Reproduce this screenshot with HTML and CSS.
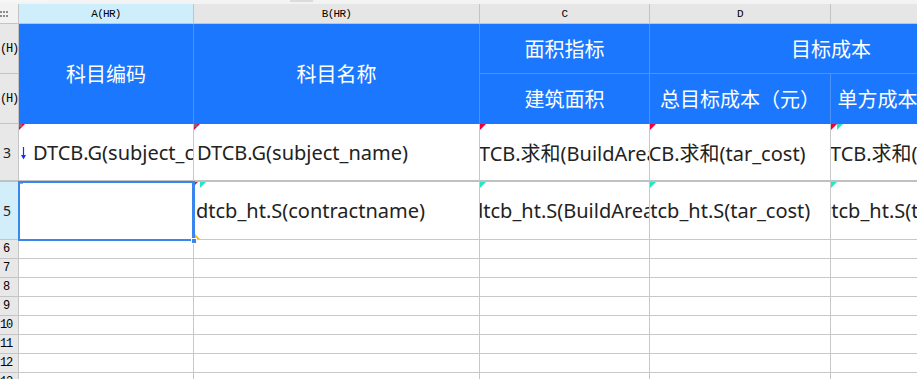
FILE: index.html
```html
<!DOCTYPE html>
<html>
<head>
    <meta charset="utf-8">
    <title>报表设计</title>
    <link rel="stylesheet" href="styles.css">
</head>
<body>
<div class="sheet">
    <div class="topbar"><span class="tab"></span><span class="tab dark"></span></div>
    <div class="grid">
        <!-- column headers -->
        <div class="cell corner"><span class="dots"></span></div>
        <div class="cell colhead active">A(HR)</div>
        <div class="cell colhead">B(HR)</div>
        <div class="cell colhead">C</div>
        <div class="cell colhead">D</div>
        <div class="cell colhead">E</div>

        <!-- report header rows -->
        <div class="cell rowhead tag">(H)</div>
        <div class="cell hd span-rows">科目编码</div>
        <div class="cell hd span-rows">科目名称</div>
        <div class="cell hd">面积指标</div>
        <div class="cell hd span-cols">目标成本</div>

        <div class="cell rowhead tag hd-last">(H)</div>
        <div class="cell hd hd-last">建筑面积</div>
        <div class="cell hd hd-last">总目标成本（元）</div>
        <div class="cell hd hd-last">单方成本（元/㎡）</div>

        <!-- row 3 -->
        <div class="cell rowhead num thick">3</div>
        <div class="cell data thick">
            <span class="mark red"></span><span class="mark grey"></span>
            <svg class="arrow" width="5" height="13" viewBox="0 0 5 13"><path d="M2.5 0V9" stroke="#1530f0" stroke-width="1.2"/><path d="M0 8H5L2.5 12.5Z" fill="#1530f0"/></svg>
            <span class="txt">DTCB.G(subject_code)</span>
        </div>
        <div class="cell data thick">
            <span class="mark red"></span><span class="mark grey"></span>
            <span class="txt">DTCB.G(subject_name)</span>
        </div>
        <div class="cell data thick"><span class="mark red"></span><span class="txt off-15">DTCB.求和(BuildArea)</span></div>
        <div class="cell data thick"><span class="mark red"></span><span class="txt off-26">DTCB.求和(tar_cost)</span></div>
        <div class="cell data thick"><span class="mark red"></span><span class="mark cyan second"></span><span class="txt off-15">DTCB.求和(tar_cost)/DTCB.求和(BuildArea)</span></div>

        <!-- row 5 -->
        <div class="cell rowhead num active">5</div>
        <div class="cell data"><span class="mark grey small"></span></div>
        <div class="cell data">
            <span class="mark red tiny"></span><span class="mark cyan second"></span>
            <span class="txt lower">dtcb_ht.S(contractname)</span>
            <span class="mark yellow"></span>
        </div>
        <div class="cell data"><span class="mark cyan"></span><span class="txt off-9">dtcb_ht.S(BuildArea)</span></div>
        <div class="cell data"><span class="mark cyan"></span><span class="txt off-12">dtcb_ht.S(tar_cost)</span></div>
        <div class="cell data"><span class="mark cyan"></span><span class="txt off-12">dtcb_ht.S(tar_cost)</span></div>

        <!-- empty rows -->
        <div class="cell rowhead">6</div><div class="cell"></div><div class="cell"></div><div class="cell"></div><div class="cell"></div><div class="cell"></div>
        <div class="cell rowhead">7</div><div class="cell"></div><div class="cell"></div><div class="cell"></div><div class="cell"></div><div class="cell"></div>
        <div class="cell rowhead">8</div><div class="cell"></div><div class="cell"></div><div class="cell"></div><div class="cell"></div><div class="cell"></div>
        <div class="cell rowhead">9</div><div class="cell"></div><div class="cell"></div><div class="cell"></div><div class="cell"></div><div class="cell"></div>
        <div class="cell rowhead">10</div><div class="cell"></div><div class="cell"></div><div class="cell"></div><div class="cell"></div><div class="cell"></div>
        <div class="cell rowhead">11</div><div class="cell"></div><div class="cell"></div><div class="cell"></div><div class="cell"></div><div class="cell"></div>
        <div class="cell rowhead">12</div><div class="cell"></div><div class="cell"></div><div class="cell"></div><div class="cell"></div><div class="cell"></div>
        <div class="cell rowhead">13</div><div class="cell"></div><div class="cell"></div><div class="cell"></div><div class="cell"></div><div class="cell"></div>
    </div>
    <div class="selection"><span class="handle"></span></div>
</div>
</body>
</html>
```

FILE: styles.css
```css
*
{
    box-sizing: border-box;
}
body
{
    margin: 0;
    background: #fff;
    font-family: "Noto Sans", "Noto Sans CJK SC", sans-serif;
}
.sheet
{
    position: relative;
    width: 917px;
    height: 379px;
    overflow: hidden;
}
.topbar
{
    height: 4px;
    background: #f3f3f3;
    display: flex;
}
.tab
{
    width: 47px;
    height: 2px;
    background: #f7f7f7;
}
.tab.dark
{
    width: 23px;
    margin-left: 243px;
    background: #dcdcdc;
}
.grid
{
    display: grid;
    grid-template-columns: 19px 175px 286px 170px 181px 182px;
    grid-template-rows: 20px 50px 50px 58px 58px repeat(8, 19px);
    width: 1013px;
}
.cell
{
    position: relative;
    display: flex;
    align-items: center;
    overflow: hidden;
    white-space: nowrap;
    border-right: 1px solid #c8c8c8;
    border-bottom: 1px solid #c8c8c8;
}
.corner
{
    background: #f2f2f2;
    border-color: #c4c4c4;
}
.dots
{
    position: absolute;
    left: 0;
    top: 7px;
    width: 8px;
    height: 6px;
    background: linear-gradient(90deg, #8c8c8c 2px, transparent 2px) 0 0 / 3px 4px;
    -webkit-mask: linear-gradient(#000 2px, transparent 2px) 0 0 / 3px 4px;
}
.colhead
{
    justify-content: center;
    background: #e6e6e6;
    font: 11px "Liberation Mono", monospace;
    letter-spacing: -0.7px;
    color: #000;
    border-color: #c4c4c4;
}
.colhead.active
{
    background: #cdeefa;
}
.rowhead
{
    justify-content: center;
    padding-right: 6px;
    background: #e8e8e8;
    font: 12px "Liberation Mono", monospace;
    letter-spacing: -1.2px;
    color: #000;
    border-color: #c4c4c4;
}
.rowhead.tag
{
    padding-right: 0;
}
.rowhead.num
{
    justify-content: flex-start;
    padding: 0 0 0 3px;
    font: 14px "Noto Sans", sans-serif;
    letter-spacing: 0;
    color: #222;
}
.rowhead.active
{
    background: #d2eefa;
}
.hd
{
    justify-content: center;
    background: #1b78fe;
    color: #fff;
    font: 20px "Noto Sans CJK SC", sans-serif;
    border-color: #4d93f7;
}
.hd-last
{
    border-bottom-color: #1b78fe;
}
.rowhead.hd-last
{
    border-bottom-color: #c4c4c4;
}
.span-rows
{
    grid-row: span 2;
    border-bottom-color: #1b78fe;
}
.span-cols
{
    grid-column: span 2;
}
.thick
{
    border-bottom: 2px solid #c0c0c0;
}
.data
{
    font-size: 20px;
    color: #222;
    padding-left: 3px;
}
.txt.lower
{
    margin-left: -1px;
}
.off-15 { margin-left: -18px; }
.off-26 { margin-left: -29px; }
.off-9 { margin-left: -12px; }
.off-12 { margin-left: -15px; }
.arrow
{
    margin: 2px 7px 0 -1px;
    flex: none;
}
.mark
{
    position: absolute;
    top: 0;
    left: 0;
    width: 6px;
    height: 6px;
    clip-path: polygon(0 0, 100% 0, 0 100%);
}
.mark.red { background: #f2003c; }
.mark.cyan { background: #25e8c2; }
.mark.second { left: 6px; }
.mark.grey
{
    width: 3px;
    height: 3px;
    background: #808080;
    clip-path: none;
    opacity: 0.7;
}
.mark.grey.small
{
    left: 1px;
    width: 3px;
    height: 2px;
}
.mark.tiny
{
    width: 4px;
    height: 4px;
    background: #a03050;
}
.mark.yellow
{
    top: auto;
    bottom: 0;
    width: 6px;
    height: 6px;
    background: #ffbf00;
    clip-path: polygon(0 0, 0 100%, 100% 100%);
}
.selection
{
    position: absolute;
    left: 18px;
    top: 181px;
    width: 177px;
    height: 60px;
    border: 2px solid #3a86ec;
    border-width: 2px 3px 2px 2px;
}
.handle
{
    position: absolute;
    right: -5px;
    bottom: -5px;
    width: 6px;
    height: 6px;
    background: #3a86ec;
    border: 1px solid #fff;
}
```
